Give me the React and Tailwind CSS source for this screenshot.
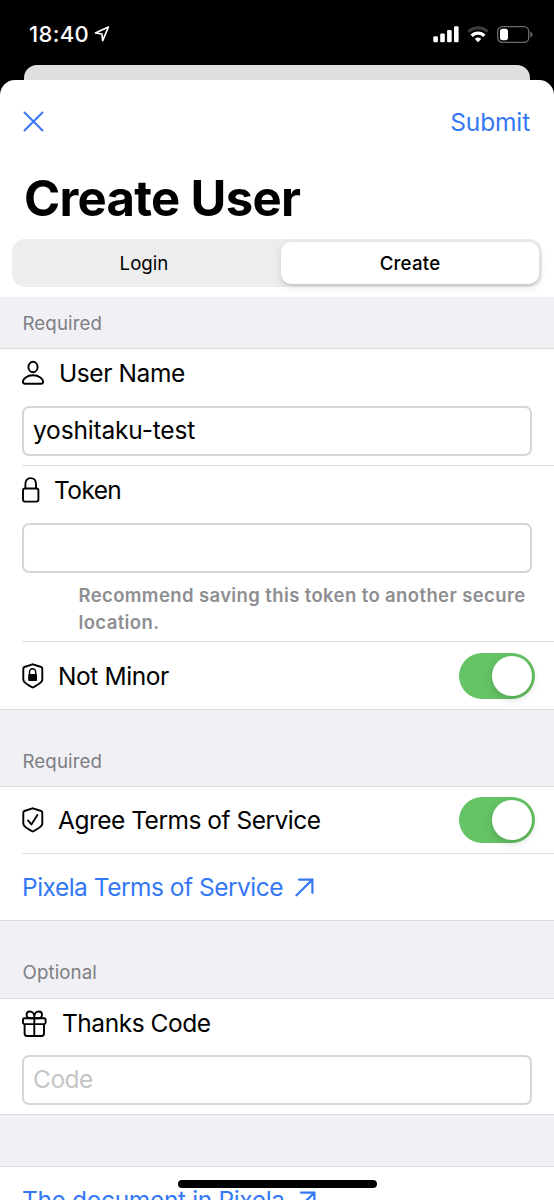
import { useState } from 'react';

const SignalIcon = () => (
  <svg width="26" height="17" viewBox="0 0 26 17" fill="white">
    <rect x="0.300" y="10.300" width="4.600" height="6" rx="1.200" />
    <rect x="7.200" y="7.500" width="4.600" height="8.800" rx="1.200" />
    <rect x="14.100" y="3.900" width="4.600" height="12.400" rx="1.200" />
    <rect x="21" y="0.300" width="4.600" height="16" rx="1.200" />
  </svg>
);

const WifiIcon = () => (
  <svg width="22" height="17" viewBox="0 0 22 17" fill="none">
    <path d="M1.300 5.700a14 14 0 0 1 19.400 0" stroke="#3a3a3a" strokeWidth="3.200" />
    <path d="M4.700 9.800a8.800 8.800 0 0 1 12.600 0" stroke="white" strokeWidth="3.200" />
    <path d="M11 16.200l-3.200-3.200a4.800 4.800 0 0 1 6.400 0z" fill="white" />
  </svg>
);

const BatteryIcon = () => (
  <svg width="36" height="17" viewBox="0 0 36 17" fill="none">
    <rect x="0.700" y="0.700" width="31" height="15.600" rx="4.600" stroke="#6b6b6b" strokeWidth="1.300" />
    <rect x="3" y="2.800" width="8" height="11.400" rx="2.600" fill="white" />
    <path d="M33.400 5.600v5.800c1.200-.5 2-1.600 2-2.900s-.8-2.400-2-2.900z" fill="#6b6b6b" />
  </svg>
);

const LocationIcon = () => (
  <svg width="16" height="16" viewBox="0 0 16 16" fill="none" stroke="white" strokeWidth="1.700" strokeLinejoin="round">
    <path d="M14.400 1L1.400 7l6.500 1 .8 6.600z" />
  </svg>
);

const CloseIcon = () => (
  <svg width="21" height="21" viewBox="0 0 21 21" fill="none" stroke="currentColor" strokeWidth="2" strokeLinecap="round">
    <path d="M1.500 1.500l18 18M19.500 1.500l-18 18" />
  </svg>
);

const PersonIcon = () => (
  <svg width="22" height="26" viewBox="0 0 22 26" fill="none" stroke="currentColor" strokeWidth="1.900">
    <ellipse cx="11" cy="7" rx="4.600" ry="5.200" />
    <path d="M3 23.700c-1.300 0-2.100-.6-2.100-1.700 0-3.100 4-6.700 10.100-6.700s10.100 3.600 10.100 6.700c0 1.100-.8 1.700-2.100 1.700z" />
  </svg>
);

const LockIcon = () => (
  <svg width="18" height="26" viewBox="0 0 18 26" fill="none" stroke="currentColor" strokeWidth="1.900">
    <rect x="1" y="11.500" width="15.400" height="13.100" rx="2" />
    <path d="M3.400 11.500V7c0-3.500 2.200-5.900 5.300-5.900S14 3.500 14 7v4.500" />
  </svg>
);

const ShieldIcon = ({ children }) => (
  <svg width="22" height="26" viewBox="0 0 22 26" fill="none" stroke="currentColor" strokeWidth="1.900" strokeLinejoin="round">
    <path d="M10.400 1.300Q10.700 1.200 11 1.300l8.200 2.700q1.100.4 1.100 1.500v10.700q0 1.500-1 2.600-1.500 1.700-7.800 5.500-.7.400-1.400 0-6.300-3.800-7.800-5.500-1-1.100-1-2.600V5.500q0-1.100 1.100-1.500z" />
    {children}
  </svg>
);

const GiftIcon = () => (
  <svg width="25" height="28" viewBox="0 0 25 28" fill="none" stroke="currentColor" strokeWidth="1.900" strokeLinejoin="round">
    <rect x="1" y="8.300" width="22.600" height="5.800" rx="1.500" />
    <path d="M2.600 14.100v9.500q0 2.400 2.400 2.400h14.600q2.400 0 2.400-2.400v-9.500M12.300 8.300V26" />
    <path d="M12.300 8.300H8.400C6 8.300 4.600 6.700 4.600 4.800s1.300-3.300 3.200-3.300c2.500 0 4.500 2.200 4.500 5.300 0-3.100 2-5.300 4.500-5.300C18.700 1.500 20 2.900 20 4.800s-1.400 3.500-3.800 3.500z" />
  </svg>
);

const ArrowIcon = () => (
  <svg width="19" height="19" viewBox="0 0 19 19" fill="none" stroke="currentColor" strokeWidth="2.200" strokeLinecap="round" strokeLinejoin="round">
    <path d="M1.500 17.300L17.400 1.600M4 1.600h13.400v13.200" />
  </svg>
);

const SectionHeader = ({ title, className }) => (
  <div className={`flex items-end bg-[#f0f0f5] border-b border-[#dcdcdf] px-[22.500px] text-[18.700px] leading-[28px] tracking-[0.100px] text-[#7e7e83] ${className}`}>
    {title}
  </div>
);

const Toggle = ({ checked, onChange }) => (
  <button
    role="switch"
    aria-checked={checked}
    onClick={() => onChange(!checked)}
    className={`flex h-[46px] w-[76px] items-center rounded-full p-[3px] ${checked ? 'justify-end bg-[#65c466]' : 'justify-start bg-[#e9e9eb]'}`}
  >
    <span className="size-10 rounded-full bg-white shadow-[0_3px_8px_rgba(0,0,0,0.18)]" />
  </button>
);

const TextField = (props) => (
  <input
    className="block h-[50px] w-[510px] rounded-[7px] border-2 border-[#d6d6d7] bg-white px-[9px] pb-[2px] text-[24.500px] tracking-[-0.170px] placeholder:text-[#c5c5c7] placeholder:tracking-[-0.500px] outline-none"
    {...props}
  />
);

const App = () => {
  const [userName, setUserName] = useState('yoshitaku-test');
  const [token, setToken] = useState('');
  const [code, setCode] = useState('');
  const [notMinor, setNotMinor] = useState(true);
  const [agree, setAgree] = useState(true);

  return (
    <div className="relative h-[1200px] w-[554px] overflow-hidden bg-black font-['Inter',sans-serif] text-[24.500px] leading-[30px] text-black">
      {/* Status bar */}
      <div className="flex h-[65px] items-center pl-[22px] pr-[21px] pt-[3px] text-white">
        <span className="ml-[7px] text-[22px] font-medium tracking-[0.350px]">18:40</span>
        <span className="ml-[5px]"><LocationIcon /></span>
        <div className="ml-auto flex items-center gap-[8px]">
          <SignalIcon />
          <WifiIcon />
          <BatteryIcon />
        </div>
      </div>
      <div className="mx-[24px] h-[15px] rounded-t-[13px] bg-[#dfdfdf]" />

      <div className="h-[1120px] rounded-t-[15px] bg-white">
        <div className="flex h-[84px] items-center justify-between pl-[23px] pr-[24px] text-[#3478f6]">
          <button aria-label="Close" className="pb-[2px]"><CloseIcon /></button>
          <button className="tracking-[-0.150px]">Submit</button>
        </div>
        <h1 className="h-[75px] pl-[24px] pt-[5px] text-[49px] leading-[60px] font-bold tracking-[-0.700px]">Create User</h1>

        {/* Segmented control */}
        <div className="mx-[12px] flex h-[48px] rounded-[13px] bg-[#ededee] p-[3px] text-[18.700px]">
          <button className="w-[266px] pr-[8px] pt-px">Login</button>
          <button className="h-[42px] flex-1 rounded-[10px] bg-white pt-px font-medium tracking-[0.200px] shadow-[0_3px_8px_rgba(0,0,0,0.12),0_2px_1px_rgba(0,0,0,0.06)]">Create</button>
        </div>

        <SectionHeader title="Required" className="mt-[10px] h-[52px] pb-[10px]" />
        <div className="pl-[22px]">
          <div className="h-[117px] border-b border-[#dfdfe1]">
            <div className="flex h-[57px] items-center pb-[9px]">
              <PersonIcon />
              <span className="ml-[15px] tracking-[-0.400px]">User Name</span>
            </div>
            <TextField value={userName} onChange={(e) => setUserName(e.target.value)} />
          </div>
          <div className="h-[176px] border-b border-[#dfdfe1]">
            <div className="flex h-[57px] items-center pb-[9px]">
              <LockIcon />
              <span className="ml-[14px] tracking-[-0.600px]">Token</span>
            </div>
            <TextField value={token} onChange={(e) => setToken(e.target.value)} />
            <p className="pl-[56.500px] pt-[9px] text-[18.500px] leading-[26.500px] font-semibold tracking-[0.380px] text-[#8e8e92]">
              Recommend saving this token to another secure<br />location.
            </p>
          </div>
          <div className="flex h-[67px] items-center pr-[19px]">
            <ShieldIcon>
              <path d="M7.500 11V9.300a3.100 3.600 0 0 1 6.200 0V11" strokeWidth="1.500" />
              <rect x="6.200" y="10.900" width="8.800" height="7.200" rx="1" fill="currentColor" stroke="none" />
            </ShieldIcon>
            <span className="ml-[14px] mr-auto tracking-[-0.400px]">Not Minor</span>
            <Toggle checked={notMinor} onChange={setNotMinor} />
          </div>
        </div>

        <SectionHeader title="Required" className="h-[78px] border-t pb-[10px]" />
        <div className="pl-[22px]">
          <div className="flex h-[67px] items-center border-b border-[#dfdfe1] pr-[19px]">
            <ShieldIcon>
              <path d="M6 13.400l3.400 4.100 6-9.500" strokeLinecap="round" />
            </ShieldIcon>
            <span className="ml-[14px] mr-auto tracking-[-0.500px]">Agree Terms of Service</span>
            <Toggle checked={agree} onChange={setAgree} />
          </div>
          <a className="flex h-[66px] items-center text-[#3478f6]">
            <span className="mr-[12px] tracking-[-0.500px]">Pixela Terms of Service</span>
            <ArrowIcon />
          </a>
        </div>

        <SectionHeader title="Optional" className="h-[79px] border-t pb-[11px]" />
        <div className="h-[115px] pl-[22px]">
          <div className="flex h-[56px] items-center pb-[7px]">
            <GiftIcon />
            <span className="ml-[15px] pb-[2px] tracking-[-0.470px]">Thanks Code</span>
          </div>
          <TextField placeholder="Code" value={code} onChange={(e) => setCode(e.target.value)} />
        </div>

        <div className="h-[53px] border-y border-[#dcdcdf] bg-[#f0f0f5]" />
        <a className="flex h-[66px] items-center pl-[22px] text-[#3478f6]">
          <span className="mr-[12px] tracking-[-0.350px]">The document in Pixela</span>
          <ArrowIcon />
        </a>
      </div>

      {/* Home indicator */}
      <div className="absolute left-[178px] top-[1180px] h-[8px] w-[199px] rounded-full bg-black" />
    </div>
  );
};

export default App;
